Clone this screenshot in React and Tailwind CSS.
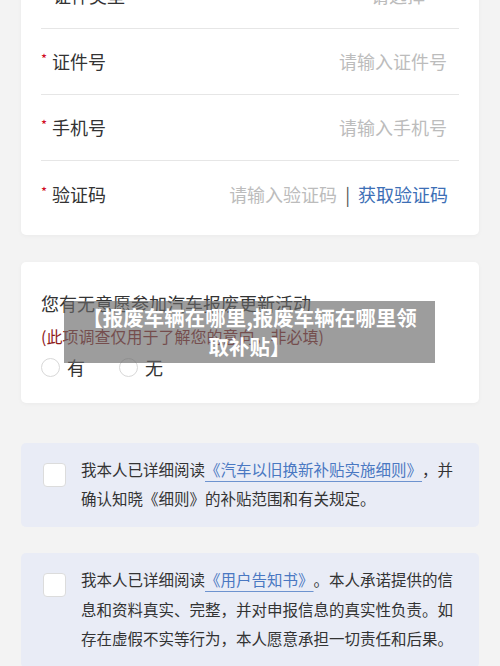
import React from 'react';

const font = { fontFamily: '"Noto Sans CJK SC", "Noto Sans", sans-serif' };

function Row({ label, children, last }) {
  return (
    <div className={`flex items-center h-[66px] ${last ? '' : 'border-b border-[#e6e6e6]'}`}>
      <span className="text-[#d0021b] text-[13px] leading-none mr-[5px] -mt-[6px]">*</span>
      <span className="text-[18px] text-[#333]">{label}</span>
      <div className="ml-auto flex items-center">{children}</div>
    </div>
  );
}

function Radio({ label }) {
  return (
    <div className="flex items-center gap-[7px]">
      <span className="w-[19px] h-[19px] rounded-full border border-[#d8d8d8] bg-white" />
      <span className="text-[18px] text-[#333] leading-[22px]">{label}</span>
    </div>
  );
}

function Check() {
  return <span className="shrink-0 w-[23px] h-[24px] mt-[8px] rounded-[4px] border border-[#dcdcdc] bg-white" />;
}

export default function App() {
  return (
    <div className="relative min-h-[666px] bg-[#f3f3f3] overflow-hidden pb-10 [text-spacing-trim:space-all]" style={font}>
      <div className="mx-[21px] -mt-[37px] bg-white rounded-[5px] shadow-[0_1px_4px_rgba(0,0,0,0.04)] px-5 pb-[8px]">
        <div className="flex items-center h-[66px] border-b border-[#e6e6e6]">
          <span className="text-[18px] text-[#333] ml-[12px]">证件类型</span>
          <span className="ml-auto mr-[34px] text-[18px] text-[#bbb]">请选择</span>
        </div>
        <Row label="证件号">
          <span className="text-[18px] text-[#bcbcbc] mr-3">请输入证件号</span>
        </Row>
        <Row label="手机号">
          <span className="text-[18px] text-[#bcbcbc] mr-3">请输入手机号</span>
        </Row>
        <Row label="验证码" last>
          <span className="text-[18px] text-[#bcbcbc]">请输入验证码</span>
          <span className="text-[18px] text-[#555] mx-[8px]">|</span>
          <span className="text-[18px] text-[#3d6fb6] mr-[11px]">获取验证码</span>
        </Row>
      </div>

      <div className="mx-[21px] mt-[27px] bg-white rounded-[5px] shadow-[0_1px_4px_rgba(0,0,0,0.04)] px-5 pt-[28px] pb-[25px]">
        <div className="text-[18px] leading-[26px] text-[#333]">您有无意愿参加汽车报废更新活动</div>
        <div className="mt-[7px] text-[16px] leading-[26px] text-[#8e1b1b]">(此项调查仅用于了解您的意向，非必填)</div>
        <div className="mt-[7px] flex items-center gap-[34px] h-[22px]">
          <Radio label="有" />
          <Radio label="无" />
        </div>
      </div>

      <div className="mx-[21px] mt-[40px] bg-[#e9ecf6] rounded-[5px] pl-[22px] pt-[12px] pb-[14px] flex gap-[15px]">
        <Check />
        <p className="w-[380px] text-[15.5px] leading-[29px] text-[#333]">
          我本人已详细阅读
          <span className="text-[#4a78c2] underline decoration-[#6d93cf] decoration-1 underline-offset-[5px]">《汽车以旧换新补贴实施细则》</span>
          ，并确认知晓《细则》的补贴范围和有关规定。
        </p>
      </div>

      <div className="mx-[21px] mt-[26px] bg-[#e9ecf6] rounded-[5px] pl-[22px] pt-[12px] pb-[14px] flex gap-[15px]">
        <Check />
        <p className="w-[380px] text-[15.5px] leading-[29.5px] text-[#333]">
          我本人已详细阅读
          <span className="text-[#4a78c2] underline decoration-[#6d93cf] decoration-1 underline-offset-[5px]">《用户告知书》</span>
          。本人承诺提供的信息和资料真实、完整，并对申报信息的真实性负责。如存在虚假不实等行为，本人愿意承担一切责任和后果。
        </p>
      </div>

      <div className="absolute left-[64px] top-[301px] w-[371px] h-[62px] bg-[rgba(105,105,105,0.65)] flex items-center justify-center px-[14px]">
        <p className="text-white font-bold text-[20.5px] leading-[29px] text-center">【报废车辆在哪里,报废车辆在哪里领取补贴】</p>
      </div>
    </div>
  );
}
